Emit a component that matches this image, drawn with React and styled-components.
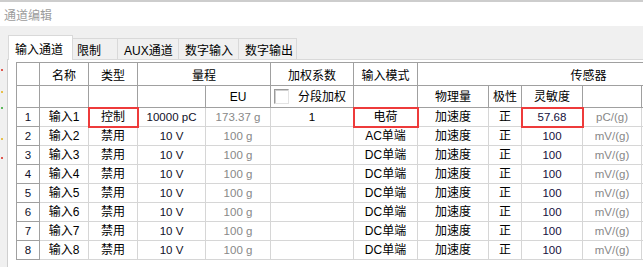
import React from 'react';
import styled, { createGlobalStyle, css } from 'styled-components';

const GlobalStyle = createGlobalStyle`
  body {
    margin: 0;
    background: #f0f0f0;
    font-family: "Liberation Sans", "Noto Sans CJK SC", sans-serif;
  }
`;

const tones = {
    text: '#000',
    num: '#101028',
    gray: '#888888',
    sens: '#16103c',
};

const Window = styled.div`
    width: 643px;
    height: 267px;
    overflow: hidden;

    display: flex;
    flex-direction: column;

    background: #f0f0f0;
`

const TitleBar = styled.div`
    flex: none;
    height: 24px;
    border-top: 2px solid #cdcdcd;
    padding-left: 4px;

    display: flex;
    align-items: center;

    background: #fff;
    font-size: 12px;
    color: #9c9c9c;
`

const TabStrip = styled.div`
    flex: none;
    height: 33px;
    padding-left: 10px;

    display: flex;
    align-items: flex-end;
`

const Tab = styled.div`
    box-sizing: border-box;
    width: ${(p) => p.$w}px;
    height: 21px;
    margin-right: -1px;
    padding-left: 6px;

    display: flex;
    align-items: center;

    border: 1px solid #d9d9d9;
    border-bottom: none;
    background: #f0f0f0;

    font-size: 12px;
    color: #000;
    white-space: nowrap;

    ${(p) => p.$active && css`
        position: relative;
        z-index: 1;
        width: ${p.$w + 4}px;
        height: 25px;
        margin: 0 -3px -1px -2px;
        background: #fff;
    `}
`

const PanelRow = styled.div`
    flex: 1;
    min-height: 0;
    display: flex;
`

const LeftStrip = styled.div`
    flex: none;
    width: 7px;

    background-color: #f0f0f0;
    background-image: linear-gradient(
        #f0f0f0 0 10px, #e0574e 10px 12px,
        #f0f0f0 12px 32px, #e8c04a 32px 34px,
        #f0f0f0 34px 48px, #5cb85c 48px 50px,
        #f0f0f0 50px 79px, #e8c04a 79px 81px,
        #f0f0f0 81px 98px, #e0574e 98px 100px,
        #f0f0f0 100px
    );
    background-size: 2px 100%;
    background-position: 1px 0;
    background-repeat: no-repeat;
`

const Panel = styled.div`
    flex: 1;
    min-width: 0;
    padding: 2px 0 0 8px;
    overflow: hidden;

    border-top: 1px solid #d9d9d9;
    border-left: 1px solid #cfcfcf;
    background: #fff;
`

const Grid = styled.div`
    display: grid;
    grid-template-columns: 23px 49px 49px 68px 65px 83px 64px 71px 33px 61px 59px 118px;
    grid-template-rows: 23px 22px repeat(8, 19px);
    width: max-content;

    border-top: 1px solid #a0a0a0;
    border-left: 1px solid #a0a0a0;
`

const Cell = styled.div`
    box-sizing: border-box;
    position: relative;
    grid-column: ${(p) => (p.$span ? `span ${p.$span}` : 'auto')};

    display: flex;
    align-items: center;
    justify-content: center;

    border-right: 1px solid ${(p) => (p.$head ? '#a0a0a0' : '#d6d6d6')};
    border-bottom: 1px solid ${(p) => (p.$head ? '#a0a0a0' : '#d6d6d6')};
    background: #fff;

    font-size: ${(p) => (p.$num ? 11.5 : 12)}px;
    line-height: 14px;
    color: ${(p) => tones[p.$tone || 'text']};
    white-space: nowrap;

    ${(p) => p.$top && css`
        padding-top: 3px;
    `}

    ${(p) => p.$mark && css`
        &::after {
            content: '';
            position: absolute;
            top: -1px;
            left: -1px;
            right: -2px;
            bottom: -2px;
            z-index: 1;
            border: 2px solid #ee3b3b;
            pointer-events: none;
        }
    `}
`

const WeightCell = styled(Cell)`
    justify-content: flex-start;
    gap: 9px;
    padding-left: 3px;
`

const Check = styled.span`
    box-sizing: border-box;
    width: 15px;
    height: 15px;

    border: 1px solid;
    border-color: #9a9a9a #e3e3e3 #e3e3e3 #9a9a9a;
    box-shadow: inset 1px 1px 0 #cfcfcf;
    background: #fff;
`

const tabs = [
    { label: '输入通道', w: 61, active: true },
    { label: '限制', w: 48 },
    { label: 'AUX通道', w: 62 },
    { label: '数字输入', w: 61 },
    { label: '数字输出', w: 59 },
];

const rows = [1, 2, 3, 4, 5, 6, 7, 8].map((n) => ({
    n,
    name: '输入' + n,
    type: n === 1 ? '控制' : '禁用',
    range: n === 1 ? '10000 pC' : '10 V',
    eu: n === 1 ? '173.37 g' : '100 g',
    weight: n === 1 ? '1' : '',
    mode: n === 1 ? '电荷' : n === 2 ? 'AC单端' : 'DC单端',
    sens: n === 1 ? '57.68' : '100',
    unit: n === 1 ? 'pC/(g)' : 'mV/(g)',
}));

const ChannelRow = ({ row }) => {
    const first = row.n === 1;
    return (
        <>
            <Cell $head $num $tone="num">{row.n}</Cell>
            <Cell>{row.name}</Cell>
            <Cell $mark={first}>{row.type}</Cell>
            <Cell $num $tone="num">{row.range}</Cell>
            <Cell $num $tone="gray">{row.eu}</Cell>
            <Cell $num>{row.weight}</Cell>
            <Cell $mark={first}>{row.mode}</Cell>
            <Cell>加速度</Cell>
            <Cell>正</Cell>
            <Cell $num $tone="sens" $mark={first}>{row.sens}</Cell>
            <Cell $num $tone="gray">{row.unit}</Cell>
            <Cell />
        </>
    );
};

const App = () => (
    <>
        <GlobalStyle />
        <Window>
            <TitleBar>通道编辑</TitleBar>
            <TabStrip>
                {tabs.map((t) => (
                    <Tab key={t.label} $w={t.w} $active={t.active}>{t.label}</Tab>
                ))}
            </TabStrip>
            <PanelRow>
                <LeftStrip />
                <Panel>
                    <Grid>
                        <Cell $head />
                        <Cell $head $top>名称</Cell>
                        <Cell $head $top>类型</Cell>
                        <Cell $head $top $span={2}>量程</Cell>
                        <Cell $head $top>加权系数</Cell>
                        <Cell $head $top>输入模式</Cell>
                        <Cell $head $top $span={5}>传感器</Cell>

                        <Cell $head />
                        <Cell $head />
                        <Cell $head />
                        <Cell $head />
                        <Cell $head>EU</Cell>
                        <WeightCell $head><Check />分段加权</WeightCell>
                        <Cell $head />
                        <Cell $head>物理量</Cell>
                        <Cell $head>极性</Cell>
                        <Cell $head>灵敏度</Cell>
                        <Cell $head />
                        <Cell $head />

                        {rows.map((row) => (
                            <ChannelRow key={row.n} row={row} />
                        ))}
                    </Grid>
                </Panel>
            </PanelRow>
        </Window>
    </>
);

export default App;
